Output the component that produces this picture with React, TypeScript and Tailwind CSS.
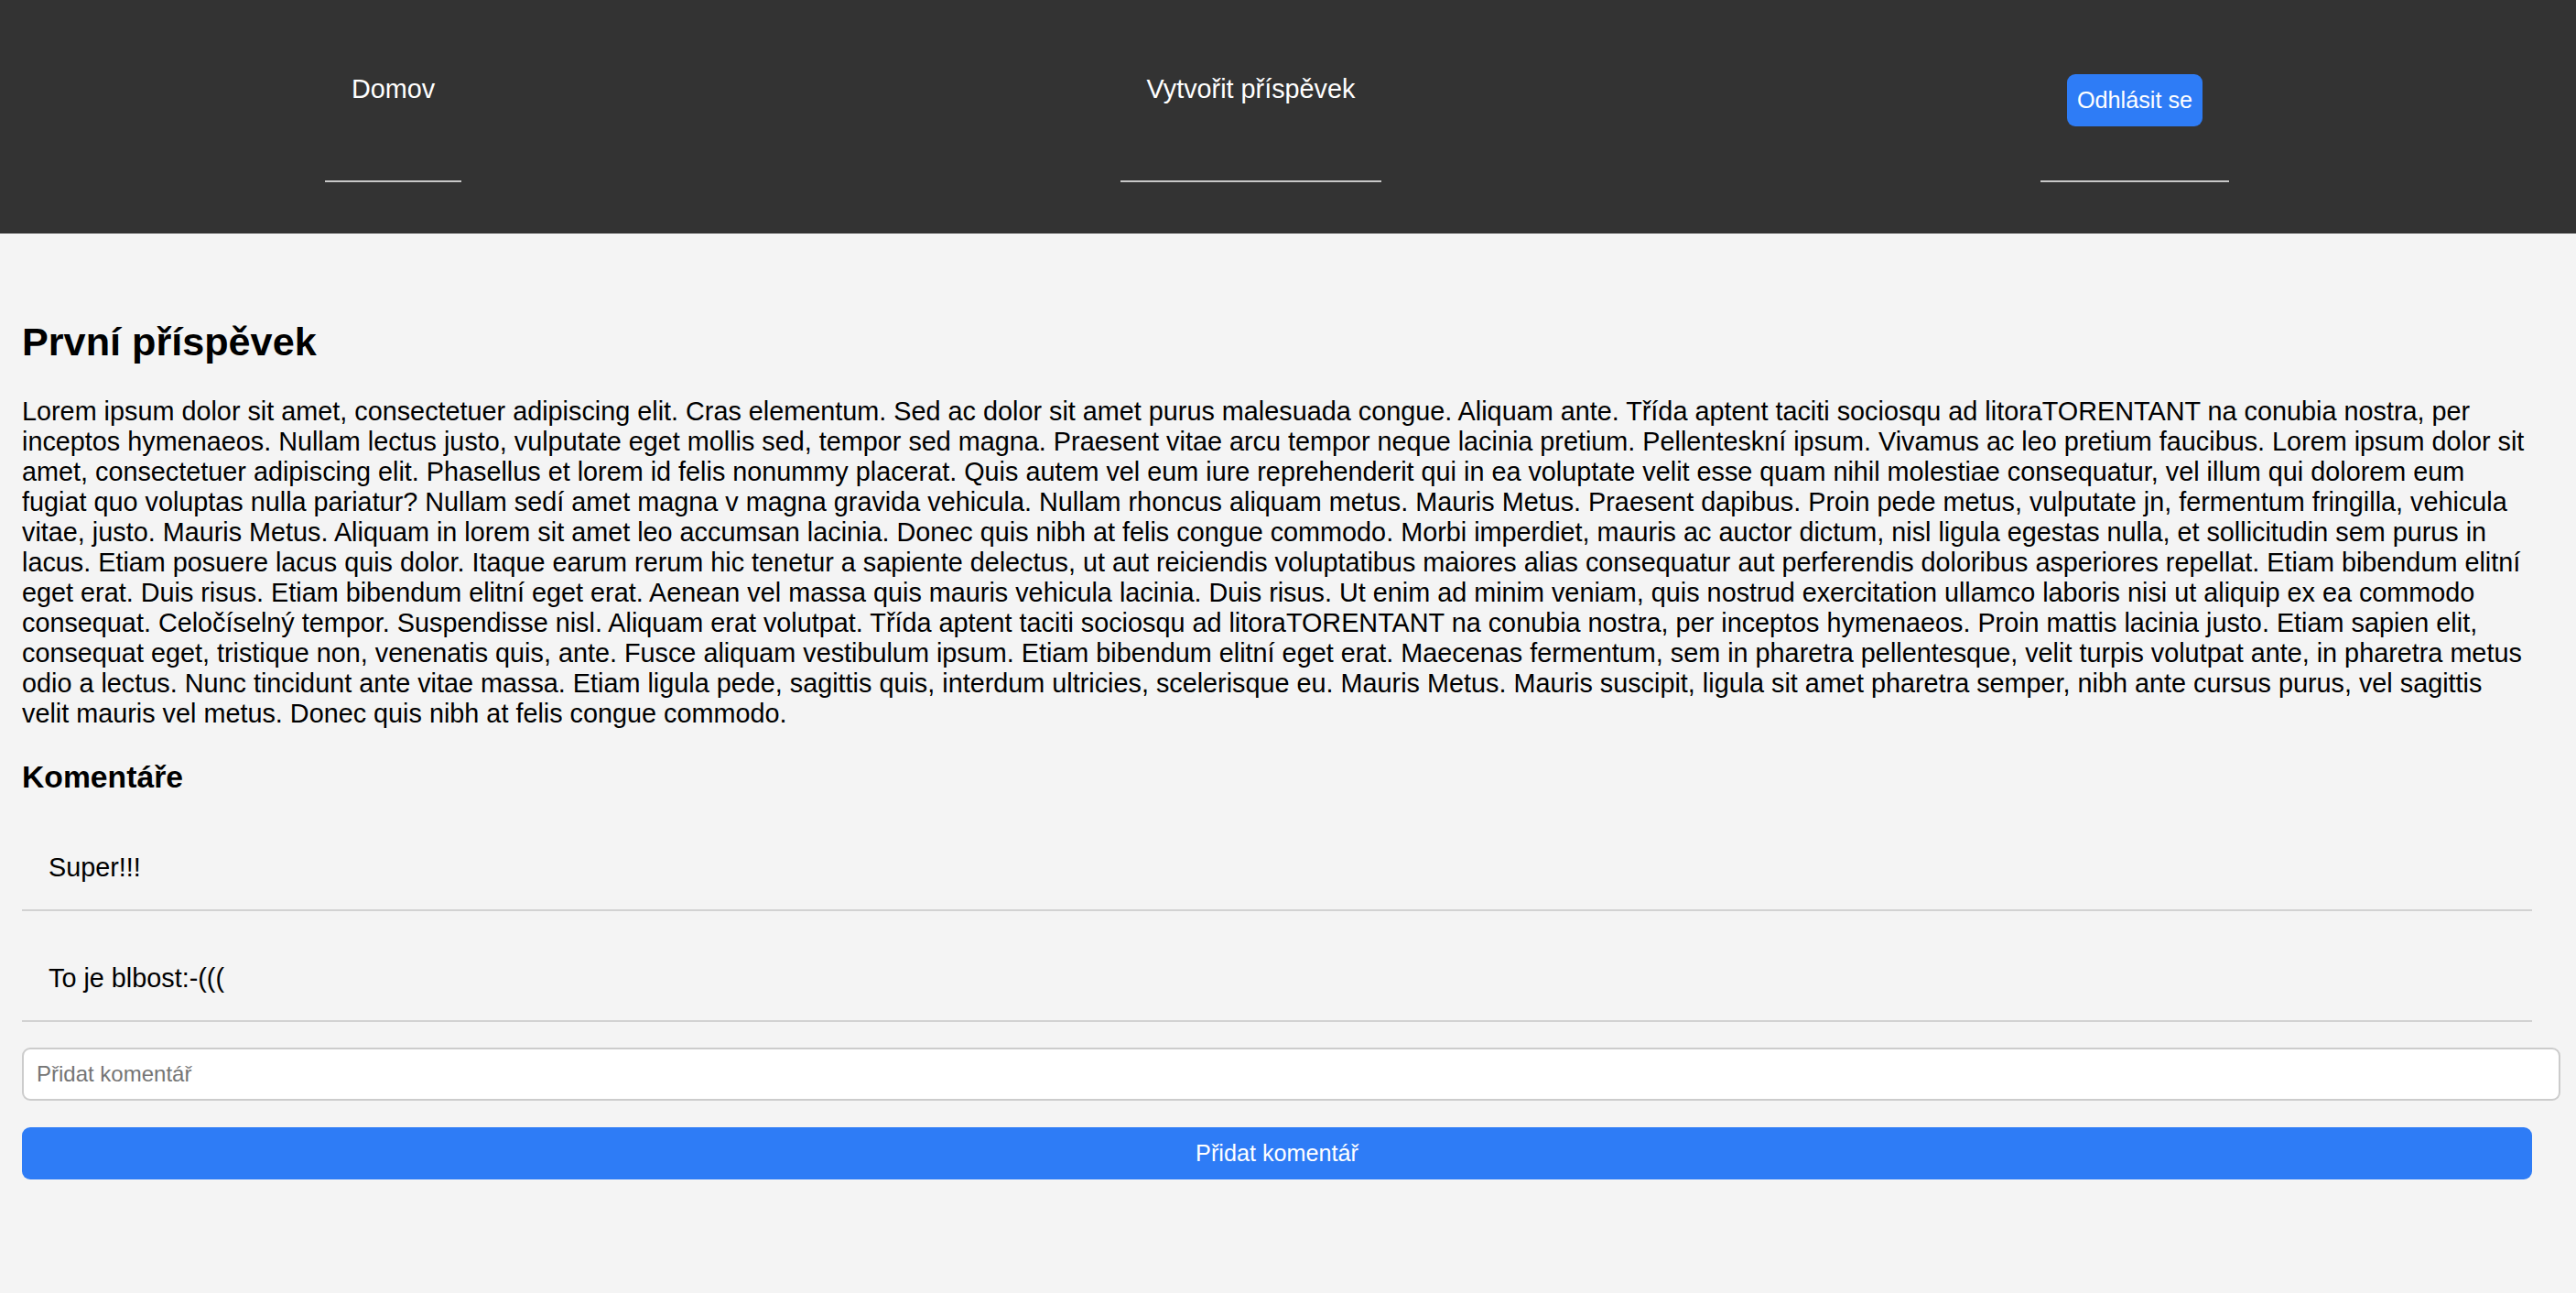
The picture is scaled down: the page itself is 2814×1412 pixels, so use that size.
import { useState } from 'react';

const postText =
  'Lorem ipsum dolor sit amet, consectetuer adipiscing elit. Cras elementum. Sed ac dolor sit amet purus malesuada congue. Aliquam ante. Třída aptent taciti sociosqu ad litoraTORENTANT na conubia nostra, per inceptos hymenaeos. Nullam lectus justo, vulputate eget mollis sed, tempor sed magna. Praesent vitae arcu tempor neque lacinia pretium. Pellenteskní ipsum. Vivamus ac leo pretium faucibus. Lorem ipsum dolor sit amet, consectetuer adipiscing elit. Phasellus et lorem id felis nonummy placerat. Quis autem vel eum iure reprehenderit qui in ea voluptate velit esse quam nihil molestiae consequatur, vel illum qui dolorem eum fugiat quo voluptas nulla pariatur? Nullam sedí amet magna v magna gravida vehicula. Nullam rhoncus aliquam metus. Mauris Metus. Praesent dapibus. Proin pede metus, vulputate jn, fermentum fringilla, vehicula vitae, justo. Mauris Metus. Aliquam in lorem sit amet leo accumsan lacinia. Donec quis nibh at felis congue commodo. Morbi imperdiet, mauris ac auctor dictum, nisl ligula egestas nulla, et sollicitudin sem purus in lacus. Etiam posuere lacus quis dolor. Itaque earum rerum hic tenetur a sapiente delectus, ut aut reiciendis voluptatibus maiores alias consequatur aut perferendis doloribus asperiores repellat. Etiam bibendum elitní eget erat. Duis risus. Etiam bibendum elitní eget erat. Aenean vel massa quis mauris vehicula lacinia. Duis risus. Ut enim ad minim veniam, quis nostrud exercitation ullamco laboris nisi ut aliquip ex ea commodo consequat. Celočíselný tempor. Suspendisse nisl. Aliquam erat volutpat. Třída aptent taciti sociosqu ad litoraTORENTANT na conubia nostra, per inceptos hymenaeos. Proin mattis lacinia justo. Etiam sapien elit, consequat eget, tristique non, venenatis quis, ante. Fusce aliquam vestibulum ipsum. Etiam bibendum elitní eget erat. Maecenas fermentum, sem in pharetra pellentesque, velit turpis volutpat ante, in pharetra metus odio a lectus. Nunc tincidunt ante vitae massa. Etiam ligula pede, sagittis quis, interdum ultricies, scelerisque eu. Mauris Metus. Mauris suscipit, ligula sit amet pharetra semper, nibh ante cursus purus, vel sagittis velit mauris vel metus. Donec quis nibh at felis congue commodo.';

const App = () => {
  const [comments] = useState<string[]>(['Super!!!', 'To je blbost:-(((']);
  const [draft, setDraft] = useState('');

  return (
    <div className="min-h-screen bg-[#f4f4f4] text-black leading-[normal] font-['Liberation_Sans',Arial,sans-serif]">
      {/* navigace */}
      <header className="h-[255px] bg-[#333333] text-white">
        <ul className="flex items-start pt-[81px]">
          <li className="ml-[355px] flex h-[118px] w-[149px] flex-col items-center border-b-2 border-[#c8c8c8] text-[28.8px]">
            <a href="#">Domov</a>
          </li>
          <li className="ml-[720px] flex h-[118px] w-[285px] flex-col items-center border-b-2 border-[#c8c8c8] text-[28.8px]">
            <a href="#">Vytvořit příspěvek</a>
          </li>
          <li className="ml-[720px] flex h-[118px] w-[206px] flex-col items-center border-b-2 border-[#c8c8c8]">
            <button className="flex h-[57px] w-[148px] items-center justify-center rounded-[9px] bg-[#2e7cf6] text-[25.2px] text-white">
              Odhlásit se
            </button>
          </li>
        </ul>
      </header>

      <main className="pl-[24px] pr-[48px] pt-[94px] pb-[100px]">
        <h2 className="mb-[35px] text-[43.2px] font-bold">První příspěvek</h2>
        <p className="text-[28.8px]">{postText}</p>

        <h3 className="mt-[33px] mb-[34px] text-[33.7px] font-bold">Komentáře</h3>
        <ul>
          {comments.map((c, i) => (
            <li key={i} className="mb-[28px] border-b-2 border-[#d2d2d2] pl-[29px] pt-[29px] pb-[29px] text-[28.8px]">
              {c}
            </li>
          ))}
        </ul>

        <input
          type="text"
          value={draft}
          onChange={(e) => setDraft(e.target.value)}
          placeholder="Přidat komentář"
          className="mt-[1px] block h-[58px] w-[2773px] rounded-[9px] border-2 border-[#cccccc] bg-white px-[14px] text-[24px] text-black outline-none placeholder:text-[#757575]"
        />
        <button className="mt-[29px] flex h-[57px] w-full items-center justify-center rounded-[9px] bg-[#2e7cf6] text-[25.2px] text-white">
          Přidat komentář
        </button>
      </main>
    </div>
  );
};

export default App;
